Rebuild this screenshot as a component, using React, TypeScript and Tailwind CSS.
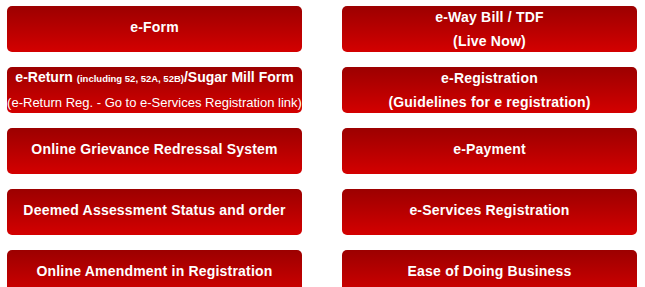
const btn =
  "flex flex-col items-center justify-center h-[46px] w-[295px] rounded-[5px] overflow-hidden text-white text-center whitespace-nowrap bg-gradient-to-b from-[#9c0000] to-[#d40000]";

function Tile({ children, single = true }: { children: React.ReactNode; single?: boolean }) {
  return <a href="#" className={`${btn} ${single ? "pb-1" : ""}`}>{children}</a>;
}

export default function App() {
  return (
    <div
      className="bg-white w-[645px] h-[287px] overflow-hidden pt-[6px] pl-[7px]"
      style={{ fontFamily: '"Liberation Sans", Arial, sans-serif' }}
    >
      <div className="grid grid-cols-[295px_295px] gap-x-[40px] gap-y-[15px] font-bold text-[14px] leading-6 tracking-[0.2px]">
        <Tile>e-Form</Tile>
        <Tile single={false}>
          <span>e-Way Bill / TDF</span>
          <span>(Live Now)</span>
        </Tile>
        <Tile single={false}>
          <span className="tracking-normal">
            e-Return <span className="text-[9.5px]">(including 52, 52A, 52B)</span>/Sugar Mill Form
          </span>
          <span className="font-normal text-[13px] tracking-normal">(e-Return Reg. - Go to e-Services Registration link)</span>
        </Tile>
        <Tile single={false}>
          <span>e-Registration</span>
          <span>(Guidelines for e registration)</span>
        </Tile>
        <Tile>Online Grievance Redressal System</Tile>
        <Tile>e-Payment</Tile>
        <Tile>Deemed Assessment Status and order</Tile>
        <Tile>e-Services Registration</Tile>
        <Tile>Online Amendment in Registration</Tile>
        <Tile>Ease of Doing Business</Tile>
      </div>
    </div>
  );
}
